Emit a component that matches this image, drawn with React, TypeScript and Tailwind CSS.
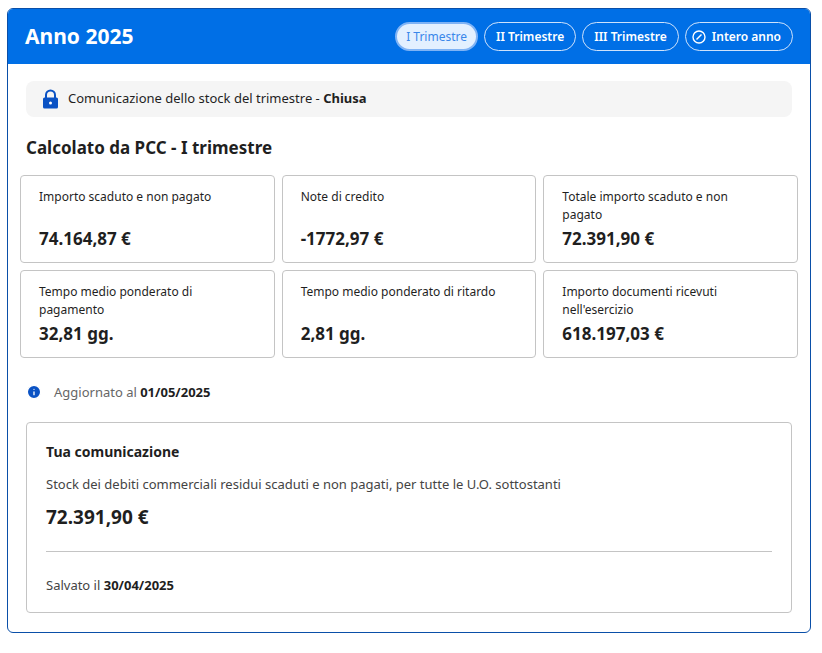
import { Info } from 'lucide-react';

const cards = [
    { label: 'Importo scaduto e non pagato', value: '74.164,87 €' },
    { label: 'Note di credito', value: '-1772,97 €' },
    { label: 'Totale importo scaduto e non pagato', value: '72.391,90 €' },
    { label: 'Tempo medio ponderato di pagamento', value: '32,81 gg.' },
    { label: 'Tempo medio ponderato di ritardo', value: '2,81 gg.' },
    { label: "Importo documenti ricevuti nell'esercizio", value: '618.197,03 €' },
];

export default function App() {
    return (
        <div className="bg-white p-[7px] pt-2 text-[#1f1f1f]" style={{ fontFamily: '"Noto Sans", sans-serif' }}>
            <div className="w-[804px] overflow-hidden rounded-md border border-[#0a4fa8]">
                <div className="flex h-[55px] items-center justify-between bg-[#006fe6] px-[17px]">
                    <h1 className="text-[21px] font-bold text-white">Anno 2025</h1>
                    <div className="flex gap-[6px]">
                        <button className="h-[29px] rounded-full border-2 border-[#7fb3f5] bg-[#e3f0ff] px-[9px] text-[12px] text-[#3a87ea]">I Trimestre</button>
                        <button className="h-[29px] rounded-full border border-[#cfe2fb] px-[11px] text-[12px] font-semibold text-white">II Trimestre</button>
                        <button className="h-[29px] rounded-full border border-[#cfe2fb] px-[11px] text-[12px] font-semibold text-white">III Trimestre</button>
                        <button className="flex h-[29px] items-center gap-[6px] rounded-full border border-[#cfe2fb] px-[6px] pr-[11px] text-[12px] font-semibold text-white">
                            <svg width="14" height="14" viewBox="0 0 14 14" fill="none" stroke="white" strokeWidth="1.4">
                                <circle cx="7" cy="7" r="6" />
                                <path d="M9.5 4.5 4.5 9.5" />
                            </svg>
                            Intero anno
                        </button>
                    </div>
                </div>
                <div className="px-3 pb-[19px] pt-[17px]">
                    <div className="mx-[6px] flex h-[36px] items-center gap-[9px] rounded-lg bg-[#f5f5f5] px-4 text-[13px]">
                        <svg width="17" height="20" viewBox="0 0 17 20">
                            <path d="M4 9V6a4.5 4.5 0 0 1 9 0v3" fill="none" stroke="#0a52c4" strokeWidth="2" />
                            <rect x="1" y="8.5" width="15" height="11" rx="1.5" fill="#0a52c4" />
                            <circle cx="8.5" cy="14" r="1.5" fill="white" />
                        </svg>
                        <span>Comunicazione dello stock del trimestre - <b>Chiusa</b></span>
                    </div>
                    <h2 className="mx-[6px] mt-[18px] text-[17px] font-bold">Calcolato da PCC - I trimestre</h2>
                    <div className="mt-[14px] grid grid-cols-3 gap-[7px]">
                        {cards.map((c) => (
                            <div key={c.label} className="flex h-[88px] flex-col justify-between rounded border border-[#c4c4c4] pb-[15px] pl-[18px] pr-[30px] pt-[12px]">
                                <div className="text-[12px] leading-[18px]">{c.label}</div>
                                <div className="text-[17px] font-bold leading-none">{c.value}</div>
                            </div>
                        ))}
                    </div>
                    <div className="mx-[6px] mt-[25px] flex items-center gap-[12px] text-[13px]">
                        <Info size={16} className="fill-[#0a52c4] text-white" />
                        <span className="text-[#666]">Aggiornato al <b className="text-[#1f1f1f]">01/05/2025</b></span>
                    </div>
                    <div className="mx-[6px] mt-[20px] rounded border border-[#c4c4c4] px-[19px] pb-[16px] pt-[18px]">
                        <div className="text-[14px] font-bold">Tua comunicazione</div>
                        <div className="mt-[13px] text-[13px] text-[#444]">Stock dei debiti commerciali residui scaduti e non pagati, per tutte le U.O. sottostanti</div>
                        <div className="mt-[8px] text-[19px] font-bold">72.391,90 €</div>
                        <div className="mt-[20px] border-t border-[#c4c4c4]" />
                        <div className="mt-[24px] text-[13px] text-[#444]">Salvato il <b className="text-[#1f1f1f]">30/04/2025</b></div>
                    </div>
                </div>
            </div>
        </div>
    );
}
